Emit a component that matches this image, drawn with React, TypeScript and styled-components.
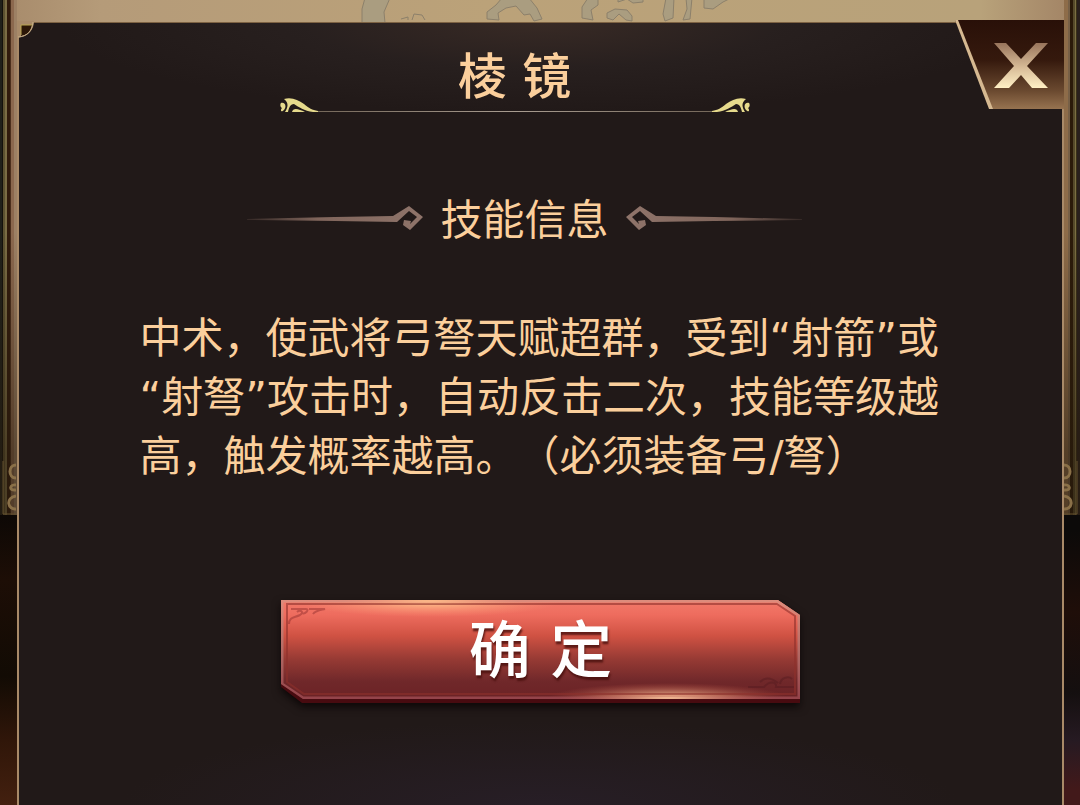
import React from "react";
import styled, { createGlobalStyle } from "styled-components";

const gold = "#fbcf9c";
const frame = "#a98a68";
const ink = "#211918";

const GlobalStyle = createGlobalStyle`
  * { box-sizing: border-box; }
  body {
    margin: 0;
    background: #120c09;
    color: ${gold};
    font-family: "DejaVu Sans", "Noto Sans CJK SC", sans-serif;
  }
`;

const Scene = styled.div`
  display: grid;
  grid-template-columns: 17px minmax(0, 1fr) 16px;
  grid-template-rows: 22px 1fr;
  min-height: 100vh;
`;

const Rail = styled.div<{ $side: "left" | "right" }>`
  grid-row: 1 / 3;
  grid-column: ${(p) => (p.$side === "left" ? 1 : 3)};
  display: flex;
  flex-direction: column;
  background: ${(p) =>
    p.$side === "left"
      ? "linear-gradient(180deg, #0d0805 64%, #1d0e06 72%, #120b04 84%, #301609 92%, #43200f 100%)"
      : "linear-gradient(180deg, #0c0a09 66%, #1f0e09 76%, #140f0f 86%, #261a22 92%, #42191a 98%)"};
`;

const Pillar = styled.div<{ $side: "left" | "right" }>`
  height: 515px;
  display: flex;
  align-items: flex-end;
  background:
    linear-gradient(180deg, rgba(30, 22, 10, 0) 45%, rgba(38, 26, 12, 0.55) 88%),
    ${(p) =>
      p.$side === "left"
        ? "linear-gradient(90deg, #20201a 0 2px, #14110c 2px 3px, #5c5130 3px 5px, #7a6d45 5px 7px, #301a0c 7px 10px, #4b2f1d 10px 11px, #8b684e 11px 14px, #9c8064 14px)"
        : "linear-gradient(90deg, #8e6c49 0 4px, #776047 4px 6px, #2b1a09 6px 9px, #55492a 9px 11px, #7b6f42 11px 12px, #3a3018 12px 13px, #2a201d 13px)"};
`;

const MapStrip = styled.div`
  grid-column: 2;
  overflow: hidden;
  background: linear-gradient(90deg, #a98d6d, #b59b79 8%, #bba279 45%, #b8a27a 92%, #a48667);
  svg { display: block; margin: 0 auto; }
`;

const Panel = styled.main`
  position: relative;
  grid-column: 2;
  display: flex;
  flex-direction: column;
  align-items: center;
  padding: 35px 24px 24px;
  border: 2px solid ${frame};
  border-top: 1px solid #7d6243;
  border-bottom: 0;
  background:
    radial-gradient(ellipse 46% 90px at 50% 0, #382a25, rgba(44, 36, 35, 0.6) 50%, transparent),
    radial-gradient(ellipse 40% 84px at 50% 100%, #271e26, transparent),
    ${ink};
`;

const Corner = styled.svg`
  position: absolute;
  left: -2px;
  top: -2px;
`;

const CloseButton = styled.button`
  position: absolute;
  top: -3px;
  right: -2px;
  padding: 0;
  border: 0;
  background: none;
  cursor: pointer;
  svg { display: block; }
`;

const Header = styled.header`
  display: flex;
  flex-direction: column;
  align-items: center;
  width: 100%;
  padding-right: 52px;
`;

const Title = styled.h1`
  margin: 0;
  font-size: 49px;
  font-weight: 500;
  line-height: 40px;
`;

const TitleRule = styled.div`
  display: flex;
  align-items: flex-end;
  width: 100%;
  max-width: 470px;
`;

const RuleLine = styled.span`
  flex: 1;
  height: 1px;
  background: linear-gradient(90deg, #75685a, #a89c90 50%, #75685a);
`;

const SectionHeading = styled.div`
  display: flex;
  align-items: center;
  justify-content: center;
  gap: 16px;
  width: 100%;
  margin-top: 88px;
  padding-right: 32px;
`;

const SectionTitle = styled.h2`
  margin: 0;
  font-size: 42px;
  font-weight: 400;
  line-height: 42px;
`;

const Description = styled.p`
  width: 100%;
  max-width: 802px;
  margin: 67px 0 0;
  font-size: 42px;
  line-height: 59px;
  text-spacing-trim: space-all;
`;

const ConfirmButton = styled.button`
  display: grid;
  width: 100%;
  max-width: 522px;
  margin: 114px 0 0;
  padding: 0;
  border: 0;
  background: none;
  color: #fff;
  font-family: inherit;
  cursor: pointer;
  filter: drop-shadow(0 4px 4px rgba(8, 2, 2, 0.8));
  > * { grid-area: 1 / 1; }
  svg { display: block; width: 100%; height: 104px; }
`;

const ConfirmLabel = styled.span`
  z-index: 1;
  font-size: 62px;
  font-weight: 500;
  line-height: 104px;
  text-shadow: 1px 3px 2px rgba(70, 15, 12, 0.8);
`;

const Curl = ({ flip }: { flip?: boolean }) => (
  <svg width="16" height="54" viewBox="0 0 16 54" aria-hidden="true">
    <g transform={flip ? "translate(16 0) scale(-1 1)" : undefined} fill="none" stroke="#8a7048" strokeWidth="3">
      <path d="M3 0V53H16" stroke="#62502f" strokeWidth="1" />
      <path d="M16 4C8 4 8 17 16 17M16 24C10 23 8 30 16 29M16 35C5 37 8 49 16 48" />
    </g>
  </svg>
);

const Swirl = ({ flip }: { flip?: boolean }) => (
  <svg width="38" height="14" viewBox="0 0 38 14" aria-hidden="true">
    <g transform={flip ? "translate(38 0) scale(-1 1)" : undefined} fill="#e6da8c">
      <path d="M4 1C12-1 18 2 24 6C29 10 32 12 38 13V14H33C24 13 19 9 14 6C10 6 9 10 8 14H5C8 9 9 5 4 1Z" />
      <path d="M1 5C5 4 7 8 4 12C1 15 0 12 2 10C0 9 0 6 1 5Z" />
      <path d="M12 14C13 9 19 11 25 14Z" />
    </g>
  </svg>
);

const Meander = ({ flip }: { flip?: boolean }) => (
  <svg width="177" height="30" viewBox="0 0 177 30" aria-hidden="true">
    <defs>
      <linearGradient id={flip ? "fadeRight" : "fadeLeft"}>
        <stop offset="0" stopColor="#80655b" stopOpacity="0.2" />
        <stop offset="0.4" stopColor="#80655b" />
        <stop offset="1" stopColor="#8f746a" />
      </linearGradient>
    </defs>
    <path
      transform={flip ? "translate(177 0) scale(-1 1)" : undefined}
      fill={`url(#${flip ? "fadeRight" : "fadeLeft"})`}
      d="M0 13L88 11L146 10L162 0L176 11L163 24L156 19L157 14L164 15L163 18L170 11L162 5L150 16L88 15L0 14Z"
    />
  </svg>
);

const MapShapes = () => (
  <svg width="400" height="22" viewBox="340 0 400 22" aria-hidden="true">
    <g fill="#aa9d80" stroke="#8c806b" strokeWidth="1">
      <path d="M364 -2L361 9V23H384L383 12L389 -2Z" />
      <path d="M400 19L407 17V20M411 20L413 14L421 15L424 20" fill="none" />
      <path d="M486 19V12L495 5L501 -2H528L536 8L541 19L533 21L529 14L523 15L515 6L505 8L497 13L498 20Z" />
      <path d="M587 -2L581 7V18L592 20L590 10L597 5V-2Z" />
      <path d="M606 18V13L614 9L626 10L631 16V21L625 20L618 14L612 20Z" />
      <path d="M617 2L626 -1L632 3L642 2V-2H617Z" />
      <path d="M665 -2L662 14L664 21L672 18L673 -2ZM685 -2L686 9L682 20L689 19L691 -2Z" />
      <path d="M703 -2V8L712 9L722 2L730 -2Z" />
    </g>
  </svg>
);

const CloseArt = () => (
  <svg width="109" height="89" viewBox="0 0 109 89" aria-hidden="true">
    <defs>
      <linearGradient id="closeFace" x2="0" y2="1">
        <stop offset="0" stopColor="#291008" />
        <stop offset="0.45" stopColor="#35190d" />
        <stop offset="0.8" stopColor="#6b4a30" />
        <stop offset="1" stopColor="#977350" />
      </linearGradient>
      <linearGradient id="closeMark" x2="0" y2="1">
        <stop offset="0" stopColor="#98745b" />
        <stop offset="0.55" stopColor="#d8bc98" />
        <stop offset="1" stopColor="#fff0c5" />
      </linearGradient>
    </defs>
    <path d="M0 0H109V89H36Z" fill="url(#closeFace)" />
    <path d="M0 0H3L38 89H34Z" fill="#d6b991" />
    <path d="M39 23H51L66 39L81 23H93L72 46L93 68H77L66 55L54 68H39L59 46Z" fill="url(#closeMark)" />
  </svg>
);

const ButtonArt = () => (
  <svg viewBox="0 0 522 104" preserveAspectRatio="none" aria-hidden="true">
    <defs>
      <linearGradient id="redFace" x2="0" y2="1">
        <stop offset="0" stopColor="#f27a6a" />
        <stop offset="0.15" stopColor="#ee6c5e" />
        <stop offset="0.36" stopColor="#d05243" />
        <stop offset="0.6" stopColor="#963a34" />
        <stop offset="0.82" stopColor="#70282a" />
        <stop offset="1" stopColor="#6b2225" />
      </linearGradient>
      <linearGradient id="redEdge" x2="0" y2="1">
        <stop offset="0" stopColor="#dd8c7c" />
        <stop offset="0.6" stopColor="#ad6460" />
        <stop offset="1" stopColor="#94434a" />
      </linearGradient>
      <radialGradient id="glowTop">
        <stop offset="0" stopColor="#ffc48c" />
        <stop offset="1" stopColor="#ff9a78" stopOpacity="0" />
      </radialGradient>
      <radialGradient id="glowBottom">
        <stop offset="0" stopColor="#ffd0a4" />
        <stop offset="1" stopColor="#c65a48" stopOpacity="0" />
      </radialGradient>
      <clipPath id="plate">
        <path d="M1 0H498L520 15V99H23L1 84Z" />
      </clipPath>
    </defs>
    <path d="M1 60H520V103H22L1 87Z" fill="#480b10" />
    <path d="M1 0H498L520 15V99H23L1 84Z" fill="url(#redFace)" />
    <g clipPath="url(#plate)">
      <ellipse cx="150" cy="2" rx="130" ry="15" fill="url(#glowTop)" />
      <ellipse cx="388" cy="98" rx="120" ry="15" fill="url(#glowBottom)" />
      <path d="M7 4H497L515 16V94H24L7 82Z" fill="none" stroke="#8d302c" strokeOpacity="0.6" strokeWidth="2" />
      <path d="M2 1H497L519 15V98H23L2 84Z" fill="none" stroke="url(#redEdge)" strokeWidth="3" />
      <ellipse cx="150" cy="1" rx="90" ry="3" fill="url(#glowTop)" />
      <ellipse cx="388" cy="98" rx="110" ry="4" fill="url(#glowBottom)" />
      <g fill="none" stroke="#8b2b2a" strokeOpacity="0.45" strokeWidth="2">
        <path d="M9 24C9 17 14 18 20 15C25 12 20 9 17 12M11 9H26C30 9 25 15 22 13M29 9H45C41 10 36 10 33 14" />
        <path d="M468 87H484C490 80 497 82 496 87H514M480 82C486 76 493 79 498 83M500 84C501 77 509 76 512 79" stroke="#541a1f" />
      </g>
    </g>
  </svg>
);

export default function App() {
  return (
    <>
      <GlobalStyle />
      <Scene lang="zh-CN">
        <Rail $side="left">
          <Pillar $side="left"><Curl /></Pillar>
        </Rail>
        <MapStrip><MapShapes /></MapStrip>
        <Panel>
          <Corner width="18" height="18" viewBox="0 0 18 18" aria-hidden="true">
            <path d="M0 0H17C17 9 11 16 0 17Z" fill="#a88a69" />
            <path d="M4 4H15C14 10 10 14 4 15Z" fill="#2c1707" />
            <path d="M4 14V4H15" fill="none" stroke="#b9a550" strokeWidth="1" />
            <path d="M16 1C15 10 11 15 1 16" fill="none" stroke="#c4ad85" strokeWidth="1" />
          </Corner>
          <CloseButton type="button" aria-label="关闭"><CloseArt /></CloseButton>
          <Header>
            <Title>棱 镜</Title>
            <TitleRule>
              <Swirl />
              <RuleLine />
              <Swirl flip />
            </TitleRule>
          </Header>
          <SectionHeading>
            <Meander />
            <SectionTitle>技能信息</SectionTitle>
            <Meander flip />
          </SectionHeading>
          <Description>
            中术，使武将弓弩天赋超群，受到“射箭”或“射弩”攻击时，自动反击二次，技能等级越高，触发概率越高。（必须装备弓/弩）
          </Description>
          <ConfirmButton type="button">
            <ButtonArt />
            <ConfirmLabel>确 定</ConfirmLabel>
          </ConfirmButton>
        </Panel>
        <Rail $side="right">
          <Pillar $side="right"><Curl flip /></Pillar>
        </Rail>
      </Scene>
    </>
  );
}
